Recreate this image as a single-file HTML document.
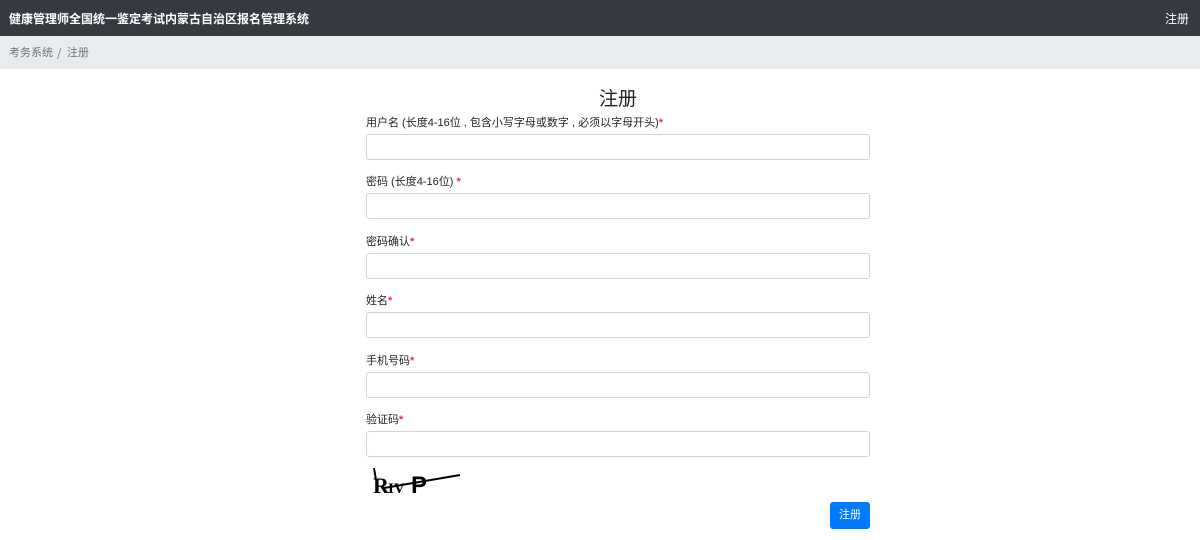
<!DOCTYPE html>
<html><head><meta charset="utf-8"><style>
*{box-sizing:border-box;margin:0;padding:0}
body{width:1200px;height:540px;background:#fff;font-family:"Liberation Sans","Noto Sans CJK SC",sans-serif;color:#212529;position:relative;overflow:hidden}
.nav{position:absolute;left:0;top:0;width:1200px;height:36px;background:#343a40;color:#fff;font-size:12px;font-weight:bold}
.nav .t{position:absolute;left:9px;top:10px}
.nav .r{position:absolute;right:11px;top:10px;font-weight:normal}
.bc{position:absolute;left:0;top:36px;width:1200px;height:33px;background:#e9ecef;font-size:11px;color:#6c757d}
.bc span{position:absolute;top:10px;line-height:14px}
h2{position:absolute;left:0;width:1236px;text-align:center;top:84px;font-size:19px;font-weight:normal}
.lab{position:absolute;left:366px;font-size:11px}
.lab b{color:#dc3545}
.in{position:absolute;left:366px;width:504px;height:26px;border:1px solid #ced4da;border-radius:3px}
.btn{position:absolute;left:830px;top:502px;width:40px;height:27px;background:#007bff;border-radius:3px;color:#fff;font-size:11px;text-align:center;line-height:27px}
</style></head><body>
<div class="nav"><span class="t">健康管理师全国统一鉴定考试内蒙古自治区报名管理系统</span><span class="r">注册</span></div>
<div class="bc"><span style="left:9px">考务系统</span><span style="left:57px;font-family:'Noto Sans CJK SC',sans-serif">/</span><span style="left:67px">注册</span></div>
<h2>注册</h2>
<div class="lab" style="top:114px">用户名 (长度4-16位 , 包含小写字母或数字 , 必须以字母开头)<b>*</b></div>
<div class="in" style="top:134px"></div>
<div class="lab" style="top:173px">密码 (长度4-16位) <b>*</b></div>
<div class="in" style="top:193px"></div>
<div class="lab" style="top:233px">密码确认<b>*</b></div>
<div class="in" style="top:253px"></div>
<div class="lab" style="top:292px">姓名<b>*</b></div>
<div class="in" style="top:312px"></div>
<div class="lab" style="top:352px">手机号码<b>*</b></div>
<div class="in" style="top:372px"></div>
<div class="lab" style="top:411px">验证码<b>*</b></div>
<div class="in" style="top:431px"></div>
<svg style="position:absolute;left:370px;top:466px" width="95" height="30">
<text x="3" y="27" font-family="Liberation Serif,serif" font-weight="bold" font-size="22" fill="#000">R</text>
<text x="18" y="27" font-family="Liberation Serif,serif" font-weight="bold" font-size="15" fill="#000">IV</text>
<text x="41" y="27" font-family="Liberation Sans,sans-serif" font-weight="bold" font-size="24" fill="#000">P</text>
<line x1="4" y1="2" x2="6" y2="14" stroke="#000" stroke-width="2"/>
<line x1="14" y1="22" x2="90" y2="9" stroke="#000" stroke-width="2"/>
</svg>
<div class="btn">注册</div>
</body></html>
